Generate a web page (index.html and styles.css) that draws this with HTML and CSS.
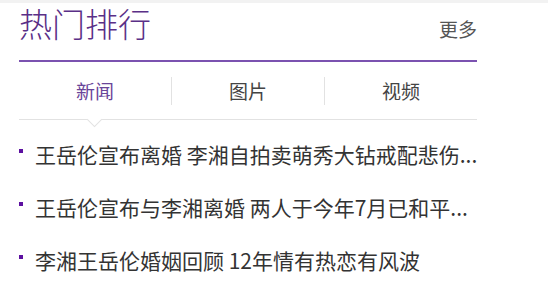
FILE: index.html
```html
<!DOCTYPE html>
<html>
<head>
    <title>热门排行</title>
    <link rel="stylesheet" href="styles.css">
</head>
<body>
    <div class="top-band"></div>
    <div class="rank-box">
        <div class="rank-hd">
            <h2 class="rank-title">热门排行</h2>
            <a class="more" href="#">更多</a>
        </div>
        <div class="tabs">
            <div class="tab active">新闻</div>
            <div class="tab">图片</div>
            <div class="tab">视频</div>
        </div>
        <ul class="rank-list">
            <li><a href="#">王岳伦宣布离婚 李湘自拍卖萌秀大钻戒配悲伤...</a></li>
            <li><a href="#">王岳伦宣布与李湘离婚 两人于今年7月已和平...</a></li>
            <li><a href="#">李湘王岳伦婚姻回顾 12年情有热恋有风波</a></li>
        </ul>
    </div>
</body>
</html>
```

FILE: styles.css
```css
body {
    margin: 0;
    font-family: "Noto Sans CJK SC", sans-serif;
    background-color: #fff;
}

.top-band {
    height: 3px;
    background-color: #f2f2f2;
}

.rank-box {
    width: 458px;
    margin-left: 19px;
}

.rank-hd {
    display: flex;
    justify-content: space-between;
    align-items: flex-start;
    height: 57px;
    border-bottom: 2px solid #7b52b0;
}

.rank-title {
    margin: 0;
    font-size: 33px;
    font-weight: 300;
    line-height: 40px;
    color: #5a2f87;
}

.more {
    font-size: 19px;
    line-height: 52px;
    color: #555;
    text-decoration: none;
}

.tabs {
    display: flex;
    padding: 15px 0 14px;
    border-bottom: 1px solid #e2e2e2;
}

.tab {
    position: relative;
    flex: 1;
    height: 28px;
    line-height: 28px;
    text-align: center;
    font-size: 19px;
    color: #444;
}

.tab + .tab {
    border-left: 1px solid #e2e2e2;
}

.tab.active {
    color: #6a4599;
}

.tab.active::after {
    content: "";
    position: absolute;
    left: 50%;
    bottom: -20px;
    width: 10px;
    height: 10px;
    margin-left: -6px;
    background-color: #fff;
    border-right: 1px solid #e2e2e2;
    border-bottom: 1px solid #e2e2e2;
    transform: rotate(45deg);
}

.rank-list {
    margin: 0;
    padding: 8px 0 0;
    list-style: none;
}

.rank-list li {
    position: relative;
    padding-left: 16px;
    line-height: 53px;
    font-size: 21px;
    white-space: nowrap;
}

.rank-list li::before {
    content: "";
    position: absolute;
    left: 0;
    top: 21px;
    width: 4px;
    height: 4px;
    background-color: #5c10a0;
}

.rank-list a {
    color: #333;
    text-decoration: none;
}
```
